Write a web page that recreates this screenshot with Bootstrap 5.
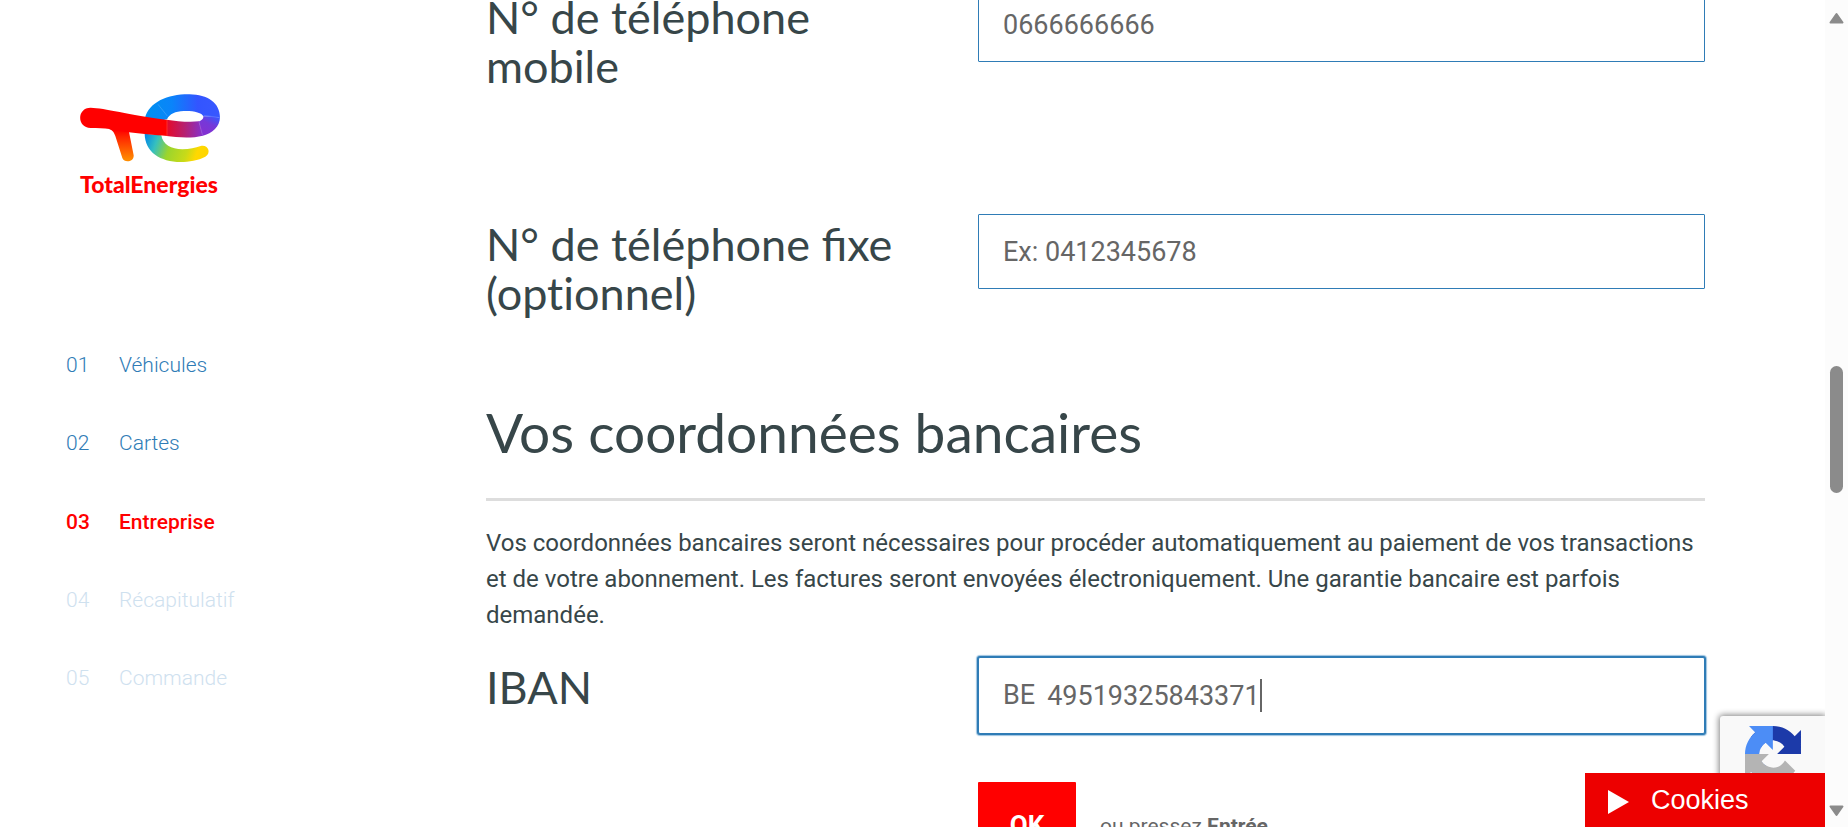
<!DOCTYPE html>
<html lang="fr">
<head>
<meta charset="utf-8">
<meta name="viewport" content="width=device-width, initial-scale=1">
<title>TotalEnergies – Entreprise</title>
<link href="https://cdn.jsdelivr.net/npm/bootstrap@5.3.0/dist/css/bootstrap.min.css" rel="stylesheet">
<style>
  :root { --ink: #374649; --line: #2f7cb6; --field: #666; --bar: 23px; }
  html, body { height: 100%; overflow: hidden; }
  body { font-family: Roboto, "Liberation Sans", sans-serif; color: var(--ink); background: #fff; padding-right: var(--bar); }

  .side { flex: 0 0 486px; padding: 94px 0 0 66px; }
  .brand { display: block; width: 145px; margin-left: 14px; color: red; text-decoration: none; font: 900 23px/28px Lato, sans-serif; }
  .brand svg { display: block; width: 141px; height: 68px; margin-bottom: 8px; }
  .steps { margin-top: 153px; height: 341px; font-size: 21px; line-height: 28px; font-weight: 300; }
  .steps a { color: var(--line); text-decoration: none; }
  .steps .num { display: inline-block; width: 53px; }
  .steps .current { color: red; font-weight: 500; }
  .steps .todo { color: #cfe1ef; }

  .form-area { margin: -13px 120px 0 0; min-width: 0; }
  .field-row { display: grid; grid-template-columns: minmax(0, 492fr) minmax(0, 727fr); }
  .field-row.tall { min-height: 227px; }
  .q-label { font: 400 45px/49px Lato, sans-serif; padding: 6px 70px 0 0; }
  .plain { font-variant-ligatures: none; }
  .section-title { font: 400 55px/64px Lato, sans-serif; margin: -41px 0 0; padding-bottom: 34px; border-bottom: 3px solid #ddd; }
  .intro { font-size: 24px; line-height: 36px; margin: 24px 0; }
  .entry { border: 1px solid var(--line); border-radius: 1px; height: 75px; padding: 0 24px; font-size: 27px; color: var(--field); background: #fff; }
  .entry::placeholder { color: var(--field); }
  .entry.active { height: 77px; box-shadow: 0 0 0 1px var(--line), 0 0 1px 2px #9cc3e0; border-radius: 2px; }
  .entry.active input { width: 14ch; border: 0; padding: 2px 0 0; margin-left: 12px; color: inherit; outline: 0; background: none; }
  .caret { width: 2px; height: 33px; background: var(--field); }
  .ok { width: 98px; height: 86px; background: red; color: #fff; border-radius: 1px; font-weight: 700; font-size: 26px; }
  .hint { color: var(--field); font-size: 21px; padding-top: 4px; }

  .captcha { right: var(--bar); bottom: 0; width: 105px; height: 111px; background: #f9f9f9; border-radius: 3px 0 0 0; clip-path: inset(-12px 0 0 -12px); box-shadow: 0 0 6px 1px #808080; padding: 10px 0 0 25px; }
  .cookies { right: var(--bar); bottom: 0; width: 240px; height: 54px; background: #ed0000; color: #fff; border: 0; font: 27px/32px "Liberation Sans", sans-serif; padding: 0 0 0 23px; gap: 22px; }
  .cookies svg { margin-top: 4px; }
  .scroller { right: 0; top: 0; bottom: 0; width: var(--bar); background: #fcfcfc; padding: 12px 0 10px; }
  .thumb { width: 13px; flex: 0 0 127px; border-radius: 7px; background: #8b8b8b; }
  .gap-above { flex: 341 0 0; }
  .gap-below { flex: 312 0 0; }
</style>
</head>
<body>
<div class="d-flex">
  <aside class="side">
    <a class="brand" href="#">
      <svg viewBox="60 42 423 204" aria-hidden="true">
        <defs>
          <linearGradient id="leg" x1="0" y1="150" x2="0" y2="240" gradientUnits="userSpaceOnUse"><stop offset="0" stop-color="#f00"/><stop offset=".2" stop-color="#ff2000"/><stop offset="1" stop-color="#ff8c00"/></linearGradient>
          <linearGradient id="top" x1="258" y1="0" x2="480" y2="0" gradientUnits="userSpaceOnUse"><stop offset="0" stop-color="#0090f0"/><stop offset=".35" stop-color="#0a84fa"/><stop offset=".7" stop-color="#3355ff"/><stop offset="1" stop-color="#3858ff"/></linearGradient>
          <linearGradient id="mix" x1="320" y1="0" x2="430" y2="0" gradientUnits="userSpaceOnUse"><stop offset="0" stop-color="#e60a28"/><stop offset=".5" stop-color="#b52172"/><stop offset="1" stop-color="#8232d2"/></linearGradient>
          <linearGradient id="turn" x1="465" y1="108" x2="438" y2="158" gradientUnits="userSpaceOnUse"><stop offset="0" stop-color="#3858ff"/><stop offset=".5" stop-color="#7638d8"/><stop offset="1" stop-color="#8232d2"/></linearGradient>
          <linearGradient id="tail" x1="256" y1="160" x2="440" y2="225" gradientUnits="userSpaceOnUse"><stop offset="0" stop-color="#0086e8"/><stop offset=".2" stop-color="#35bfc0"/><stop offset=".42" stop-color="#9bd52d"/><stop offset=".7" stop-color="#c9da18"/><stop offset=".85" stop-color="#ffd800"/><stop offset="1" stop-color="#ffd500"/></linearGradient>
        </defs>
        <path fill="url(#top)" d="M255 114C268 65 325 42 389 43C443 44 480 68 480 113L430 109C426 98 401 92 371 93C346 94 329 101 321 118L300 122Z"/>
        <path fill="url(#turn)" d="M480 112C479 140 459 160 426 168L416 125C426 121 431 116 430 109Z"/>
        <path fill="url(#mix)" d="M320 119C350 124 388 127 417 124L428 167C395 176 350 172 320 168Z"/>
        <path fill="url(#tail)" d="M254 161L304 166C308 193 334 208 367 208C389 208 406 203 422 198C446 193 454 220 436 230C415 241 387 246 362 246C301 245 255 217 254 161Z"/>
        <path fill="url(#leg)" d="M145 146C157 150 161 154 166 168L187 234C193 250 222 246 221 226L207 156L205 145Z"/>
        <path fill="#f00" d="M92 83C134 84 205 104 322 120V168C283 166 240 160 207 157C180 154 163 151 148 147C133 144 112 144 92 144C50 143 50 83 92 83Z"/>
        <path stroke="#fff" stroke-opacity=".25" fill="none" stroke-width="2" d="M294 73L322 108M431 106L479 113M417 126L428 167M321 120V169"/>
      </svg>
      TotalEnergies
    </a>
    <nav aria-label="Étapes">
      <ol class="steps list-unstyled d-flex flex-column justify-content-between mb-0">
        <li><a href="#"><span class="num">01</span>Véhicules</a></li>
        <li><a href="#"><span class="num">02</span>Cartes</a></li>
        <li><a href="#" class="current" aria-current="step"><span class="num">03</span>Entreprise</a></li>
        <li><a href="#" class="todo"><span class="num">04</span>Récapitulatif</a></li>
        <li><a href="#" class="todo"><span class="num">05</span>Commande</a></li>
      </ol>
    </nav>
  </aside>

  <main class="form-area flex-grow-1">
    <form>
      <div class="field-row tall">
        <label class="q-label" for="mobile">N° de téléphone mobile</label>
        <input class="entry w-100" id="mobile" type="tel" value="0666666666">
      </div>
      <div class="field-row tall">
        <label class="q-label" for="fixe">N° de téléphone fixe <span class="plain">(optionnel)</span></label>
        <input class="entry w-100" id="fixe" type="tel" placeholder="Ex: 0412345678">
      </div>
      <h2 class="section-title">Vos coordonnées bancaires</h2>
      <p class="intro">Vos coordonnées bancaires seront nécessaires pour procéder automatiquement au paiement de vos transactions et de votre abonnement. Les factures seront envoyées électroniquement. Une garantie bancaire est parfois demandée.</p>
      <div class="field-row">
        <label class="q-label" for="iban">IBAN</label>
        <div>
          <div class="entry active d-flex align-items-center">
            <span>BE</span><input id="iban" type="text" value="49519325843371"><span class="caret"></span>
          </div>
          <div class="d-flex align-items-center gap-4 mt-5">
            <button class="ok btn p-0" type="submit">OK</button>
            <span class="hint">ou pressez <b>Entrée</b></span>
          </div>
        </div>
      </div>
    </form>
  </main>
</div>

<div class="captcha position-fixed">
  <svg width="56" height="56" viewBox="0 0 64 64" aria-label="reCAPTCHA">
    <path fill="#1c3aa9" d="M64 31.955l-.033-1.37V4.687l-7.16 7.16C50.948 4.674 42.033.093 32.05.093c-10.4 0-19.622 4.96-25.458 12.64l11.736 11.86a15.55 15.55 0 0 1 4.754-5.334c2.05-1.6 4.952-2.906 8.968-2.906.485 0 .86.057 1.135.163 4.976.393 9.288 3.14 11.828 7.124l-8.307 8.307L64 31.953"/>
    <path fill="#4c8df6" d="M31.862.094l-1.37.033H4.594l7.16 7.16C4.58 13.147 0 22.06 0 32.046c0 10.4 4.96 19.622 12.64 25.458L24.5 45.768a15.55 15.55 0 0 1-5.334-4.754c-1.6-2.05-2.906-4.952-2.906-8.968 0-.485.057-.86.163-1.135.393-4.976 3.14-9.288 7.124-11.828l8.307 8.307L31.86.095"/>
    <path fill="#b4b4b4" d="M.001 32.045l.033 1.37v25.898l7.16-7.16c5.86 7.173 14.774 11.754 24.76 11.754 10.4 0 19.622-4.96 25.458-12.64l-11.736-11.86a15.55 15.55 0 0 1-4.754 5.334c-2.05 1.6-4.952 2.906-8.968 2.906-.485 0-.86-.057-1.135-.163-4.976-.393-9.288-3.14-11.828-7.124l8.307-8.307c-10.522.04-22.4.066-27.295-.005"/>
  </svg>
</div>
<button class="cookies position-fixed d-flex align-items-center" type="button">
  <svg width="21" height="24" viewBox="0 0 21 24" aria-hidden="true"><path fill="#fff" d="M0 0L21 12L0 24Z"/></svg>
  Cookies
</button>

<div class="scroller position-fixed d-flex flex-column align-items-center" aria-hidden="true">
  <svg width="15" height="12" viewBox="0 0 15 12"><path d="M7.500 2L13.500 10.500H1.500Z" fill="#8b8b8b" stroke="#8b8b8b" stroke-width="2" stroke-linejoin="round"/></svg>
  <div class="gap-above"></div>
  <div class="thumb"></div>
  <div class="gap-below"></div>
  <svg width="15" height="12" viewBox="0 0 15 12"><path d="M7.500 10L13.500 1.500H1.500Z" fill="#8b8b8b" stroke="#8b8b8b" stroke-width="2" stroke-linejoin="round"/></svg>
</div>
<script src="https://cdn.jsdelivr.net/npm/bootstrap@5.3.0/dist/js/bootstrap.bundle.min.js"></script>
</body>
</html>
